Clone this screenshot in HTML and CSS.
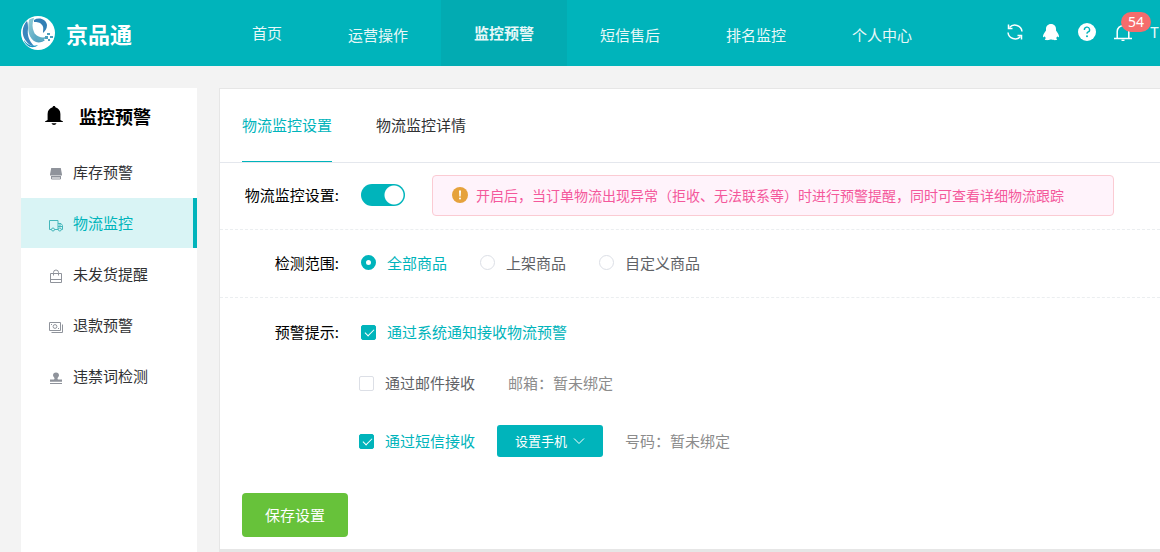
FILE: index.html
```html
<!DOCTYPE html>
<html lang="zh-CN">
<head>
<meta charset="utf-8">
<meta name="viewport" content="width=device-width, initial-scale=1">
<title>京品通</title>
<link rel="stylesheet" href="styles.css">
</head>
<body>
<header class="header">
  <a class="brand" href="#">
    <svg class="brand-logo" viewBox="0 0 34 34" aria-hidden="true">
      <defs>
        <linearGradient id="swirl" x1="0" y1="0" x2="1" y2="1">
          <stop offset="0" stop-color="#93cfd6"/>
          <stop offset="1" stop-color="#3c93ba"/>
        </linearGradient>
      </defs>
      <circle cx="17" cy="17" r="17" fill="#fff"/>
      <path d="M6 5C1 10 0 19 5 25c2 3 5 5 8 5-5-5-7-11-6-17 0-3 0-6-1-8z" fill="#3a86bd"/>
      <path d="M8 4c1-1 3-2 5-2-2 5-2 10 0 14 2 5 6 8 11 8-2 2-6 3-9 2C8 23 6 15 8 4z" fill="url(#swirl)"/>
      <path d="M13 4c5-3 12-1 13 5 0 4-2 6-4 8 0-3 1-6-1-8-2-3-5-3-8-3z" fill="#337fb5"/>
      <path d="M3 24c3 5 8 7 14 5-3 3-8 3-11 0-1-1-3-3-3-5z" fill="#1597c6"/>
      <path d="M14 18c3 3 7 4 11 3l-3 4c-4 1-8-2-8-7z" fill="#5aabc4"/>
      <path d="M26 17h3v2h-3zM24 20h3v3h-3zM29 20h3v2h-3zM27 23h2v2h-2z" fill="#4c9fbd"/>
    </svg>
    <span class="brand-name">京品通</span>
  </a>
  <nav class="nav">
    <a class="nav-link" href="#">首页</a>
    <a class="nav-link nav-link-menu" href="#">运营操作</a>
    <a class="nav-link nav-link-active" href="#">监控预警</a>
    <a class="nav-link nav-link-menu" href="#">短信售后</a>
    <a class="nav-link nav-link-menu" href="#">排名监控</a>
    <a class="nav-link nav-link-menu" href="#">个人中心</a>
  </nav>
  <div class="tools">
    <button class="tool" type="button" aria-label="刷新">
      <svg viewBox="0 0 18 18" fill="none" stroke="#fff" stroke-width="1.500">
        <path d="M3.500 4.500A7.200 7.200 0 0 1 16 8.500M14.500 13.500A7.200 7.200 0 0 1 2 9.500"/>
        <path d="M2.500 1.500v4h4M15.500 16.500v-4h-4"/>
      </svg>
    </button>
    <button class="tool" type="button" aria-label="客服">
      <svg viewBox="0 0 18 18" fill="#fff">
        <path d="M9 1c3.300 0 5 2.400 5 5v1.500c1.300 1.800 3 4 3 6 0 1-.9.900-1.800-.3-.2.800-.6 1.500-1.200 2 1 .4 1.300.9 1.100 1.400-.5.900-4 .7-5.200 0H8.100c-1.200.7-4.700.9-5.200 0-.2-.5.100-1 1.100-1.400-.6-.5-1-1.200-1.200-2C1.900 14.400 1 14.500 1 13.500c0-2 1.700-4.200 3-6V6c0-2.600 1.700-5 5-5z"/>
      </svg>
    </button>
    <button class="tool" type="button" aria-label="帮助">
      <svg viewBox="0 0 18 18">
        <circle cx="9" cy="9" r="9" fill="#fff"/>
        <path d="M6.400 7A2.600 2.600 0 1 1 9.800 9.200Q9 9.600 9 10.800" fill="none" stroke="#00b4bb" stroke-width="1.400"/>
        <circle cx="9" cy="13.200" r="1" fill="#00b4bb"/>
      </svg>
    </button>
    <button class="tool" type="button" aria-label="消息">
      <svg viewBox="0 0 18 18" fill="none" stroke="#fff" stroke-width="1.500">
        <path d="M0 15.500h18M3.200 15V8.500a5.800 5.800 0 0 1 11.600 0V15M9 2.500V1"/>
        <path d="M7.500 17.400h3"/>
      </svg>
      <span class="badge">54</span>
    </button>
    <span class="user">T</span>
  </div>
</header>

<div class="layout">
  <aside class="sidebar">
    <h2 class="side-title">
      <svg class="side-bell" viewBox="0 0 18 20" aria-hidden="true"><path d="M9 0c.8 0 1.300.5 1.400 1.200C13.500 2 15.400 4.500 15.400 8v6l2.600 1.500V16H0v-.5L2.600 14V8c0-3.500 1.900-6 5-6.800C7.700.5 8.200 0 9 0zM6.500 17.300h5c-.5 1.200-1.400 1.700-2.500 1.700s-2-.5-2.500-1.700z"/></svg>
      监控预警
    </h2>
    <nav class="side-nav">
      <a class="side-link" href="#">
        <svg class="side-icon" viewBox="0 0 14 14" fill="#8f939b"><path d="M2.200 1h9.600L13 7.500H1zM1 7.500h12v1H1z"/><path d="M2.500 9v3h9V9" fill="none" stroke="#8f939b"/><path d="M3 9h8v1.500H3z"/></svg>
        库存预警</a>
      <a class="side-link side-link-active" href="#" aria-current="page">
        <svg class="side-icon" viewBox="0 0 14 14" fill="none" stroke="#45b7bb"><path d="M2.500 11.500h-2v-9h8.500v9H5.500M9 5.500h3l1.500 2v4h-1.200M9 8.500h4.500M11 5.500v3"/><circle cx="4" cy="11.500" r="1.500"/><circle cx="10.800" cy="11.500" r="1.500"/></svg>
        物流监控</a>
      <a class="side-link" href="#">
        <svg class="side-icon" viewBox="0 0 14 14" fill="none" stroke="#8f939b"><path d="M1.500 4.500h11v9h-11zM1.500 10.500h11M4.500 6.500V3.500a2.500 2.500 0 0 1 5 0v3"/></svg>
        未发货提醒</a>
      <a class="side-link" href="#">
        <svg class="side-icon" viewBox="0 0 14 14" fill="none" stroke="#8f939b"><path d="M.5 2.500h11v8H.5zM13.500 4.500v8h-11"/><circle cx="6" cy="6.500" r="1.900"/><path d="M2 4.500h1M9 8.500h1"/></svg>
        退款预警</a>
      <a class="side-link" href="#">
        <svg class="side-icon" viewBox="0 0 14 14" fill="#8f939b"><path d="M7 1.500c1.900 0 3 1.300 3 2.700 0 1.500-1.500 2-1.500 3.300 0 .6.400 1 1 1H13v2.300H1V8.500h3.500c.6 0 1-.4 1-1C5.500 6.200 4 5.700 4 4.200c0-1.400 1.100-2.700 3-2.700zM1 12h12v1H1z"/></svg>
        违禁词检测</a>
    </nav>
  </aside>

  <main class="panel">
    <div class="tabs" role="tablist">
      <button class="tab tab-active" type="button" role="tab" aria-selected="true">物流监控设置</button>
      <button class="tab" type="button" role="tab" aria-selected="false">物流监控详情</button>
    </div>
    <form class="form">
      <div class="row row-divided">
        <label class="row-label" for="monitor">物流监控设置:</label>
        <input class="switch" type="checkbox" role="switch" id="monitor" checked>
        <p class="notice">
          <svg class="notice-icon" viewBox="0 0 16 16" aria-hidden="true"><circle cx="8" cy="8" r="8" fill="#e6a23c"/><path d="M7 3.500h2l-.3 6H7.300z" fill="#fff"/><circle cx="8" cy="11.600" r="1" fill="#fff"/></svg>
          <span>开启后，当订单物流出现异常（拒收、无法联系等）时进行预警提醒，同时可查看详细物流跟踪</span>
        </p>
      </div>
      <div class="row row-divided row-scope" role="radiogroup" aria-labelledby="scope">
        <span class="row-label" id="scope">检测范围:</span>
        <div class="choices">
          <label class="choice"><input class="radio" type="radio" name="scope" checked><span>全部商品</span></label>
          <label class="choice"><input class="radio" type="radio" name="scope"><span>上架商品</span></label>
          <label class="choice"><input class="radio" type="radio" name="scope"><span>自定义商品</span></label>
        </div>
      </div>
      <div class="row row-first">
        <span class="row-label">预警提示:</span>
        <label class="choice"><input class="check" type="checkbox" checked><span>通过系统通知接收物流预警</span></label>
      </div>
      <div class="row row-option row-mail">
        <label class="choice"><input class="check" type="checkbox"><span>通过邮件接收</span></label>
        <span class="hint">邮箱：暂未绑定</span>
      </div>
      <div class="row row-option row-sms">
        <label class="choice"><input class="check" type="checkbox" checked><span>通过短信接收</span></label>
        <button class="phone" type="button">设置手机
          <svg class="phone-arrow" viewBox="0 0 12 12" fill="none" stroke="#fff" aria-hidden="true"><path d="M1 3.500l5 5 5-5"/></svg>
        </button>
        <span class="hint">号码：暂未绑定</span>
      </div>
      <button class="save" type="submit">保存设置</button>
    </form>
  </main>
</div>
</body>
</html>
```
FILE: styles.css
```css
* {
  box-sizing: border-box;
}

body {
  margin: 0;
  height: 100vh;
  display: flex;
  flex-direction: column;
  overflow: hidden;
  background: #f3f3f3;
  color: #303133;
  font: 15px/20px "Noto Sans CJK SC", sans-serif;
}

a {
  color: inherit;
  text-decoration: none;
}

button {
  border: 0;
  padding: 0;
  background: none;
  color: inherit;
  font: inherit;
  cursor: pointer;
}

/* Header */
.header {
  display: flex;
  flex: none;
  height: 66px;
  background: #00b4bb;
  color: #e8f8f8;
  white-space: nowrap;
}

.brand {
  display: flex;
  align-items: center;
  gap: 11px;
  width: 219px;
  padding-left: 21px;
  color: #fff;
}

.brand-logo {
  width: 34px;
  height: 34px;
}

.brand-name {
  font-size: 22px;
  font-weight: 700;
}

.nav {
  display: flex;
  flex: 1;
}

.nav-link {
  padding: 0 33px;
  line-height: 66px;
}

.nav-link-menu {
  padding-top: 2px;
}

.nav-link-active {
  background: #02abb2;
  font-weight: 700;
}

.tools {
  display: flex;
  align-items: center;
  gap: 18px;
  padding-bottom: 2px;
}

.tool {
  position: relative;
  width: 18px;
  height: 18px;
}

.tool svg {
  display: block;
  width: 18px;
  height: 18px;
}

.user {
  width: 10px;
}

.badge {
  position: absolute;
  left: 7px;
  top: -11px;
  min-width: 30px;
  border-radius: 10px;
  background: #f56c6c;
  color: #fff;
  font: 14px/20px "Noto Sans", sans-serif;
  text-align: center;
}

/* Sidebar */
.layout {
  display: flex;
  flex: 1;
  align-items: flex-start;
  gap: 22px;
  padding: 22px 0 0 21px;
}

.sidebar {
  flex: none;
  align-self: stretch;
  width: 176px;
  background: #fff;
}

.side-title {
  display: flex;
  align-items: center;
  gap: 16px;
  height: 59px;
  margin: 0;
  padding: 0 0 3px 24px;
  color: #000;
  font-size: 18px;
}

.side-bell {
  width: 18px;
  height: 20px;
}

.side-nav {
  display: grid;
  gap: 1px;
}

.side-link {
  display: flex;
  align-items: center;
  gap: 10px;
  height: 50px;
  padding: 0 0 1px 28px;
}

.side-icon {
  width: 14px;
  height: 14px;
  margin-top: 4px;
}

.side-link-active {
  border-right: 4px solid #00b4bb;
  background: #d9f4f5;
  color: #00b4bb;
}

/* Panel */
.panel {
  flex: 1;
  min-width: 0;
  border: 1px solid #e6e6e6;
  border-width: 1px 0 3px 1px;
  background: #fff;
}

.tabs {
  display: flex;
  gap: 44px;
  padding: 0 22px;
  border-bottom: 1px solid #e4e7ed;
}

.tab {
  height: 73px;
  border-bottom: 1px solid transparent;
}

.tab-active {
  border-color: #00b4bb;
  color: #00b4bb;
}

.row {
  display: flex;
  align-items: center;
}

.row-divided {
  min-height: 67px;
  padding-bottom: 2px;
  border-bottom: 1px dashed #ebeef0;
}

.row-scope {
  min-height: 68px;
}

.row-label {
  flex: none;
  width: 119px;
  margin-right: 22px;
  color: #000;
  text-align: right;
}

.row-first {
  padding: 24px 0 10px;
}

.row-option {
  padding-left: 139px;
}

.row-mail {
  gap: 33px;
  min-height: 62px;
}

.row-sms {
  gap: 22px;
  min-height: 54px;
}

.switch,
.radio,
.check {
  flex: none;
  appearance: none;
  margin: 0;
  cursor: pointer;
}

.switch {
  width: 44px;
  height: 22px;
  border-radius: 11px;
  background: radial-gradient(circle at 33px 11px, #fff 9px, #00b4bb 10px);
}

.notice {
  display: flex;
  flex: 1;
  align-items: center;
  gap: 8px;
  min-height: 41px;
  margin: 0 46px 0 27px;
  padding: 0 19px;
  border: 1px solid #fbcbd3;
  border-radius: 4px;
  background: #fff3fb;
  color: #f4589b;
  font-size: 14px;
}

.notice-icon {
  flex: none;
  width: 16px;
  height: 16px;
}

.choices {
  display: flex;
  gap: 33px;
}

.choice {
  display: flex;
  align-items: center;
  gap: 11px;
  color: #606266;
  cursor: pointer;
}

.choice:has(:checked) {
  color: #00b4bb;
}

.radio,
.check {
  width: 15px;
  height: 15px;
  border: 1px solid #dcdfe6;
  border-radius: 2px;
  background: #fff;
}

.radio {
  border-radius: 50%;
}

.radio:checked {
  border: 5px solid #00b4bb;
}

.check:checked {
  border-color: #00b4bb;
  background: #00b4bb;
}

.check:checked::before {
  content: "";
  display: block;
  width: 4px;
  height: 8px;
  margin: 1px 0 0 5px;
  border: solid #fff;
  border-width: 0 1px 1px 0;
  transform: rotate(45deg);
}

.hint {
  color: #8c8c8c;
}

.phone {
  display: flex;
  align-items: center;
  justify-content: center;
  gap: 6px;
  width: 106px;
  height: 32px;
  border-radius: 3px;
  background: #00b4bb;
  color: #fff;
  font-size: 13px;
}

.phone-arrow {
  width: 12px;
  height: 12px;
}

.save {
  display: block;
  width: 106px;
  height: 44px;
  margin: 25px 22px 12px;
  border-radius: 4px;
  background: #67c23a;
  color: #fff;
}
```
